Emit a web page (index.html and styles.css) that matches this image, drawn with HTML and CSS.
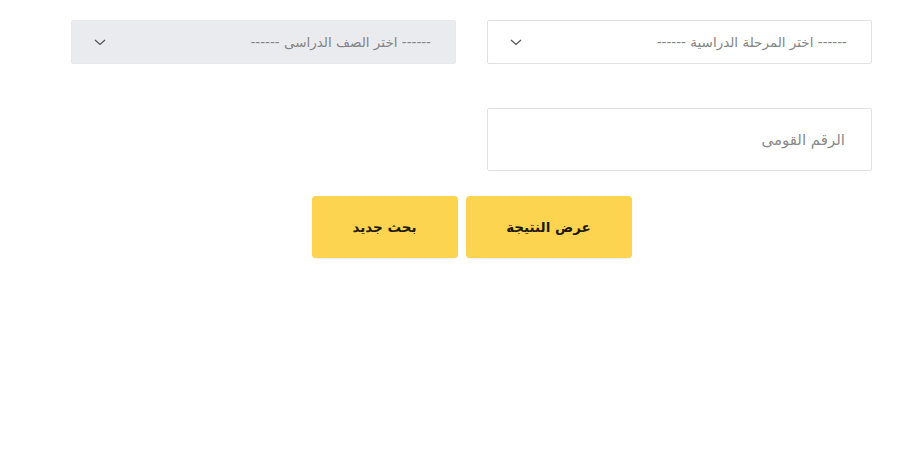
FILE: index.html
```
<!DOCTYPE html>
<html lang="ar" dir="rtl">
<head>
<meta charset="utf-8">
<title>نتيجة</title>
<link rel="stylesheet" href="styles.css">
</head>
<body>
<form class="form">
  <div class="row">
    <div class="field select">
      <span class="select-text">------ اختر المرحلة الدراسية ------</span>
      <svg class="chev" width="12" height="7" viewBox="0 0 12 7"><path d="M1 1 L6 5.5 L11 1" fill="none" stroke="#555" stroke-width="1.3"/></svg>
    </div>
    <div class="field select disabled">
      <span class="select-text">------ اختر الصف الدراسى ------</span>
      <svg class="chev" width="12" height="7" viewBox="0 0 12 7"><path d="M1 1 L6 5.5 L11 1" fill="none" stroke="#555" stroke-width="1.3"/></svg>
    </div>
  </div>
  <div class="row row-input">
    <div class="field input">
      <span class="placeholder">الرقم القومى</span>
    </div>
  </div>
  <div class="actions">
    <button type="button" class="btn btn-main">عرض النتيجة</button>
    <button type="button" class="btn btn-new">بحث جديد</button>
  </div>
</form>
</body>
</html>
```
FILE: styles.css
```
* { box-sizing: border-box; }
html, body { margin: 0; padding: 0; background: #fff; }
body {
  font-family: "DejaVu Sans", "Liberation Sans", sans-serif;
  width: 900px;
  height: 450px;
  overflow: hidden;
}
.form {
  padding: 20px 28px 0 44px;
  width: 900px;
}
.row {
  display: grid;
  grid-template-columns: 385px 385px;
  column-gap: 31px;
  justify-content: start;
}
.field {
  border: 1px solid #e2e2e2;
  border-radius: 2px;
  background: #fff;
  display: flex;
  align-items: center;
}
.select {
  height: 44px;
  padding: 0 24px 0 22px;
  justify-content: space-between;
}
.select.disabled {
  background: #e9ebee;
  border-color: #e6e8eb;
}
.select-text {
  font-size: 13.5px;
  color: #858585;
  white-space: nowrap;
}
.chev { display: block; }
.row-input { margin-top: 44px; }
.input {
  height: 63px;
  padding: 0 26px;
}
.placeholder {
  font-size: 15px;
  color: #8a8a8a;
}
.actions {
  margin-top: 25px;
  display: flex;
  justify-content: center;
  gap: 8px;
  width: 801px;
}
.btn {
  height: 62px;
  border: none;
  border-radius: 4px;
  background: #fcd44f;
  font-family: "DejaVu Sans", "Liberation Sans", sans-serif;
  font-weight: bold;
  font-size: 13.5px;
  color: #1f1a10;
  box-shadow: 0 1px 2px rgba(0,0,0,0.08);
}
.btn-main { width: 166px; }
.btn-new { width: 146px; }
```
